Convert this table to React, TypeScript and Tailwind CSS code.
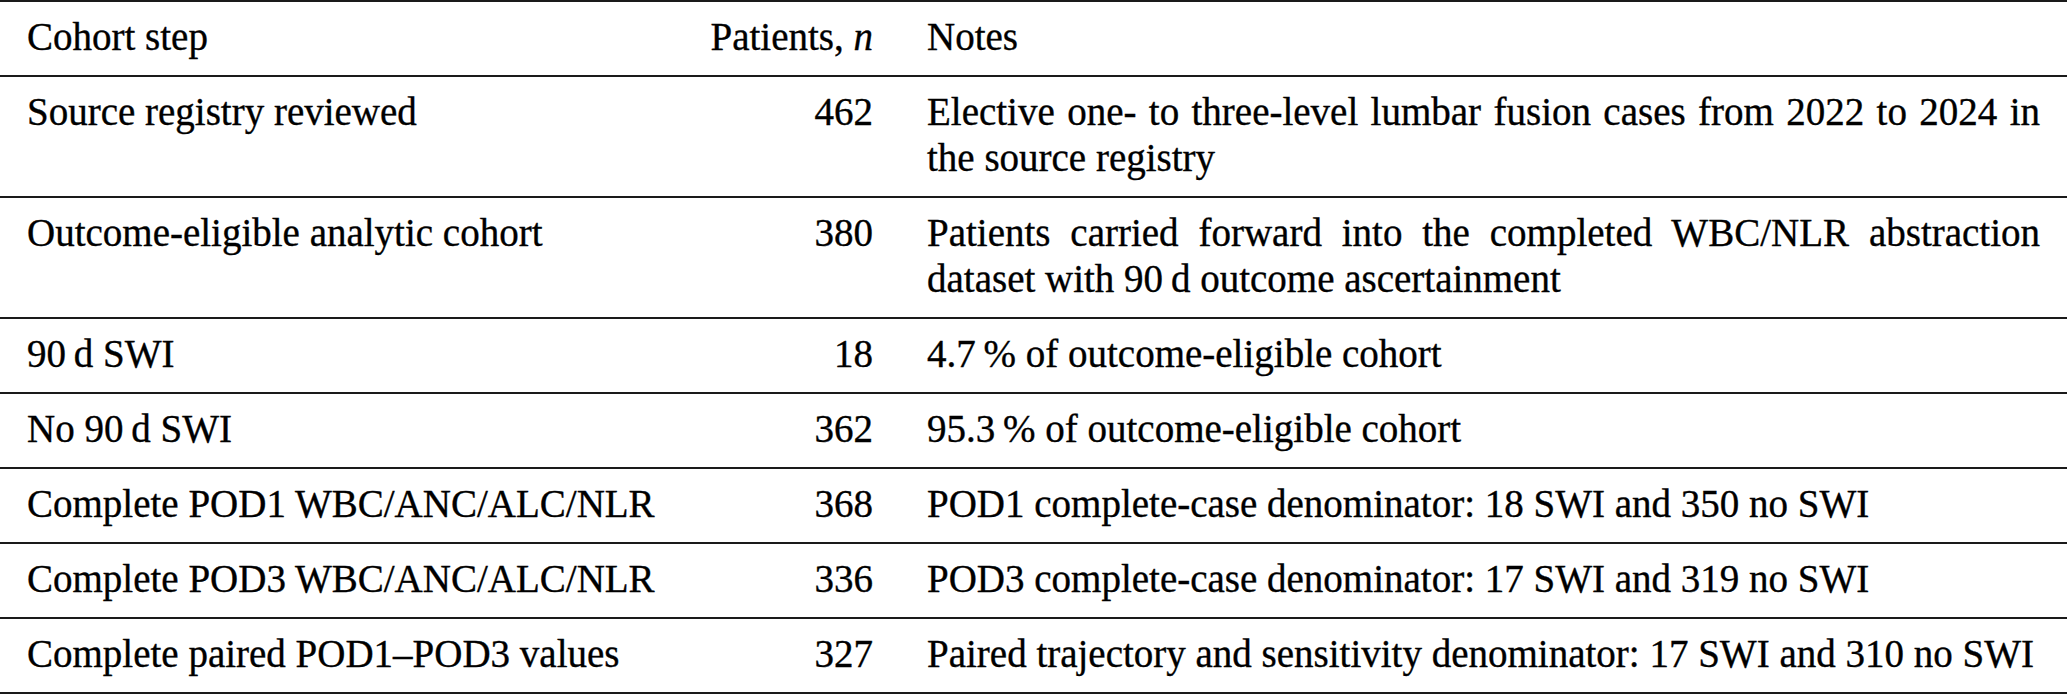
import React from 'react';

type Row = {
  step: string;
  n: string;
  notes: string[];
};

const rows: Row[] = [
  {
    step: 'Source registry reviewed',
    n: '462',
    notes: ['Elective one- to three-level lumbar fusion cases from 2022 to 2024 in', 'the source registry'],
  },
  {
    step: 'Outcome-eligible analytic cohort',
    n: '380',
    notes: ['Patients carried forward into the completed WBC/NLR abstraction', 'dataset with 90\u2009d outcome ascertainment'],
  },
  { step: '90\u2009d SWI', n: '18', notes: ['4.7\u2009% of outcome-eligible cohort'] },
  { step: 'No 90\u2009d SWI', n: '362', notes: ['95.3\u2009% of outcome-eligible cohort'] },
  {
    step: 'Complete POD1 WBC/ANC/ALC/NLR',
    n: '368',
    notes: ['POD1 complete-case denominator: 18 SWI and 350 no SWI'],
  },
  {
    step: 'Complete POD3 WBC/ANC/ALC/NLR',
    n: '336',
    notes: ['POD3 complete-case denominator: 17 SWI and 319 no SWI'],
  },
  {
    step: 'Complete paired POD1\u2013POD3 values',
    n: '327',
    notes: ['Paired trajectory and sensitivity denominator: 17 SWI and 310 no SWI'],
  },
];

const cell = 'px-[27px] pt-[12px] pb-[15px]';

const App: React.FC = () => {
  return (
    <div className="w-full bg-white text-black [font-family:'Liberation_Serif','Times_New_Roman',serif] text-[39px] leading-[46px] [-webkit-text-stroke:0.35px_black]">
      <div className="border-t-2 border-[#1a1a1a]">
        {/* header */}
        <div className="grid grid-cols-[683px_217px_1fr] border-b-2 border-[#1a1a1a]">
          <div className={cell}>Cohort step</div>
          <div className={`${cell} text-right`}>
            Patients, <span className="italic">n</span>
          </div>
          <div className={cell}>Notes</div>
        </div>

        {rows.map((r) => (
          <div key={r.step} className="grid grid-cols-[683px_217px_1fr] border-b-2 border-[#1a1a1a]">
            <div className={cell}>{r.step}</div>
            <div className={`${cell} text-right`}>{r.n}</div>
            <div className={cell}>
              {r.notes.map((line, i) => (
                <span
                  key={i}
                  className={`block whitespace-nowrap ${i < r.notes.length - 1 ? 'text-justify [text-align-last:justify]' : ''}`}
                >
                  {line}
                </span>
              ))}
            </div>
          </div>
        ))}
      </div>
    </div>
  );
};

export default App;
